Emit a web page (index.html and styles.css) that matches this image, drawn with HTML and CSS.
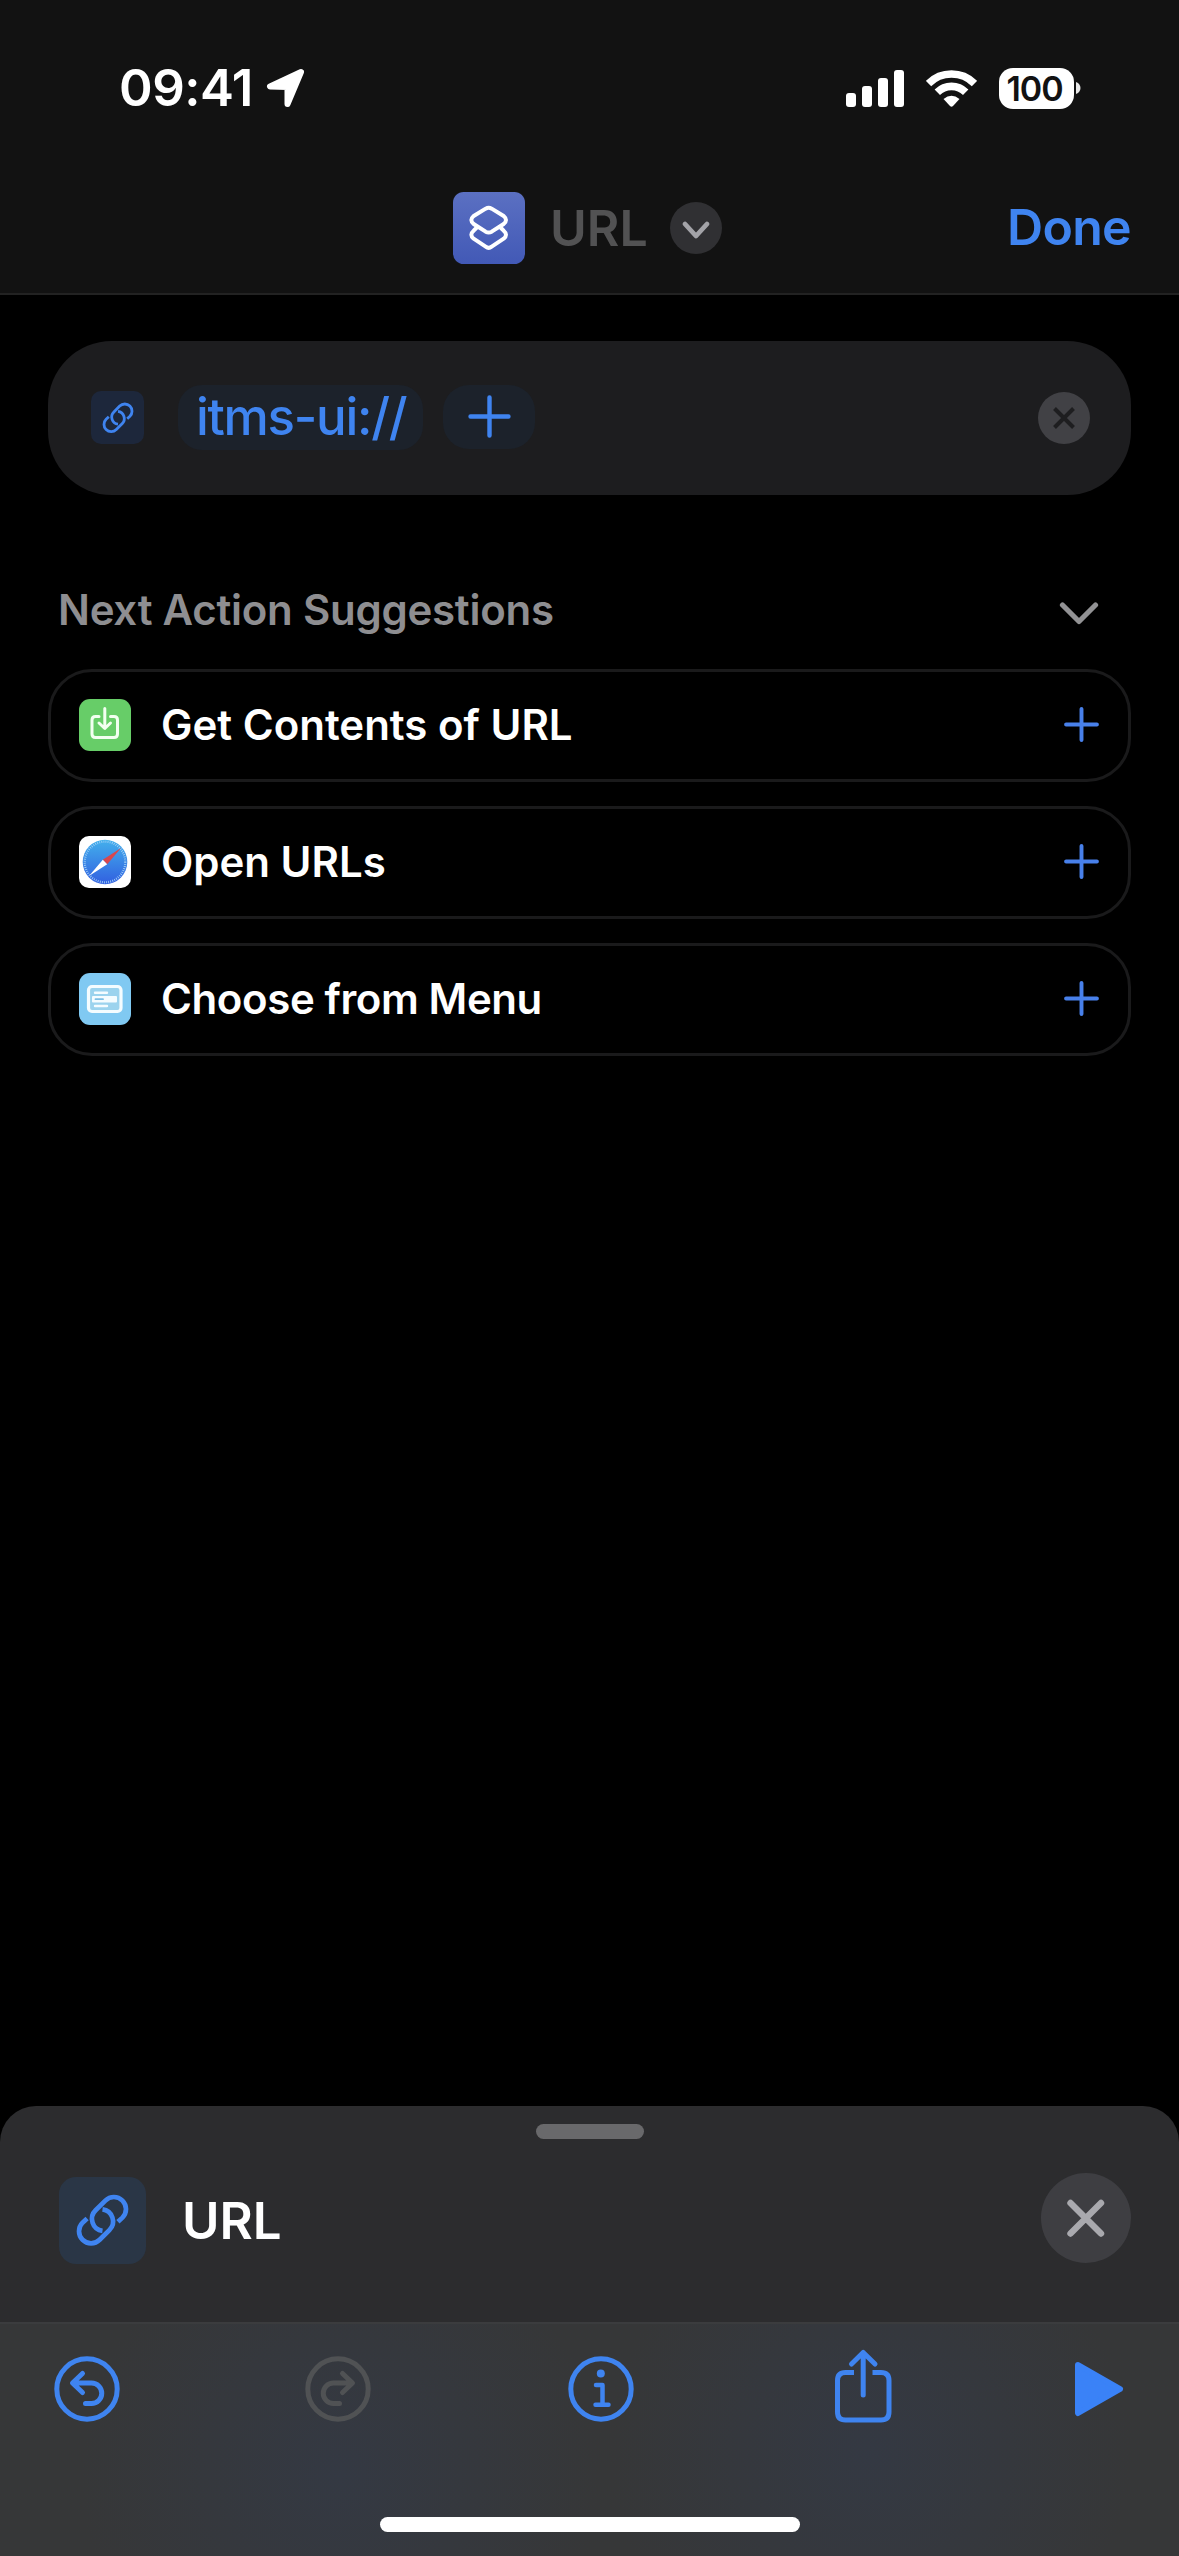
FILE: index.html
```html
<!DOCTYPE html>
<html lang="en">
<head>
<meta charset="utf-8">
<title>URL</title>
<link rel="stylesheet" href="styles.css">
</head>
<body>
<svg class="defs" aria-hidden="true">
  <symbol id="link" viewBox="0 0 170 170">
    <path d="M131 89 L144.500 76.500 A36 36 0 0 0 93.500 25.500 L64.500 54.500 A36 36 0 0 0 85 116"/>
    <path d="M39 79 L25.500 91.500 A36 36 0 0 0 76.500 142.500 L105.500 113.500 A36 36 0 0 0 85 52"/>
  </symbol>
  <symbol id="plus" viewBox="0 0 34 34"><path d="M17 2V32M2 17H32"/></symbol>
</svg>
<div class="screen">
  <header class="top">
    <div class="status">
      <div class="clock"><span class="time">09:41</span>
        <svg class="arrow" width="40" height="40" viewBox="0 0 40 40"><path d="M35 4 L4 18.500 L21.500 19 L21.500 36 Z"/></svg>
      </div>
      <div class="indicators">
        <svg width="58" height="38" viewBox="0 0 58 38" fill="#fff"><rect y="24" width="10" height="14" rx="3"/><rect x="16" y="17" width="10" height="21" rx="3"/><rect x="32" y="9" width="10" height="29" rx="3"/><rect x="48" y="1" width="10" height="37" rx="3"/></svg>
        <svg class="wifi" width="51" height="38" viewBox="0 0 51 38" fill="none" stroke="#fff" stroke-width="7.600"><path d="M2.500 14.500 A32.500 32.500 0 0 1 48.500 14.500"/><path d="M11.300 23.300 A20 20 0 0 1 39.700 23.300"/><path fill="#fff" stroke="none" d="M17.500 30 Q25.500 23.500 33.500 30 L27 37 Q25.500 38.500 24 37 Z"/></svg>
        <div class="battery"><span>100</span></div>
        <svg class="nub" width="5" height="12" viewBox="0 0 5 12" fill="#e8e8e8"><path d="M0 0 C6 2 6 10 0 12Z"/></svg>
      </div>
    </div>
    <nav class="nav">
      <div class="title">
        <svg class="app" width="72" height="72" viewBox="0 0 216 216">
          <defs><linearGradient id="indigo" x1="0" y1="0" x2="0" y2="1"><stop offset="0" stop-color="#5b70c2"/><stop offset="1" stop-color="#4259b6"/></linearGradient></defs>
          <rect width="216" height="216" rx="32" fill="url(#indigo)"/>
          <g fill="none" stroke="#fff" stroke-width="12" stroke-linecap="round" stroke-linejoin="round"><path d="M116 50 L152 72 Q166 84 152 96 L116 119 Q107 124 98 119 L62 96 Q48 84 62 72 L98 50 Q107 45 116 50Z"/><path d="M70 108 L62 116 Q48 128 62 140 L98 164 Q107 171 116 164 L152 140 Q166 128 152 116 L144 108"/></g>
        </svg>
        <h1>URL</h1>
        <svg class="expand" width="52" height="52" viewBox="0 0 52 52"><circle cx="26" cy="26" r="26" fill="#303033"/><path d="M15 22 L26 34 L37 22" fill="none" stroke="#a3a3a8" stroke-width="4.800" stroke-linecap="round" stroke-linejoin="round"/></svg>
      </div>
      <span class="done">Done</span>
    </nav>
  </header>

  <main class="content">
    <section class="action">
      <span class="tile small"><svg width="34" height="34"><use href="#link"/></svg></span>
      <span class="token">itms-ui://</span>
      <span class="add"><svg width="43" height="43"><use href="#plus"/></svg></span>
      <svg class="clear" width="52" height="52" viewBox="0 0 52 52"><circle cx="26" cy="26" r="26" fill="#414145"/><path d="M16.500 16.500 L35.500 35.500 M35.500 16.500 L16.500 35.500" stroke="#1e1e20" stroke-width="4"/></svg>
    </section>

    <div class="heading"><h2>Next Action Suggestions</h2>
      <svg width="40" height="24" viewBox="0 0 40 24"><path d="M3.500 4 L20 20.500 L36.500 4" fill="none" stroke="#929294" stroke-width="5.200" stroke-linecap="round" stroke-linejoin="round"/></svg>
    </div>

    <ul class="suggestions">
      <li>
        <svg width="52" height="52" viewBox="0 0 52 52"><rect width="52" height="52" rx="11" fill="#67cd68"/><g fill="none" stroke="#f2fff0" stroke-width="3" stroke-linecap="round" stroke-linejoin="round"><path d="M20 17.500H16.500Q13 17.500 13 21V35Q13 38.500 16.500 38.500H35Q38.500 38.500 38.500 35V21Q38.500 17.500 35 17.500H31.500M25.800 9.500V29M20 24L25.800 29.500L31.500 24"/></g></svg>
        <span>Get Contents of URL</span>
        <svg class="plus" width="35" height="35"><use href="#plus"/></svg>
      </li>
      <li>
        <svg width="52" height="52" viewBox="0 0 52 52">
          <defs><linearGradient id="sky" x1="0" y1="0" x2="0" y2="1"><stop offset="0" stop-color="#43b0ec"/><stop offset="1" stop-color="#315fe0"/></linearGradient></defs>
          <rect width="52" height="52" rx="10" fill="#fff"/><circle cx="26" cy="26" r="22.300" fill="url(#sky)"/><circle cx="26" cy="26" r="20.300" fill="none" stroke="#a5d2f8" stroke-width="2.200" stroke-dasharray=".8 1.325"/><path d="M42 12 L23.800 23.800 L28.200 28.200Z" fill="#d8474e"/><path d="M10 40 L23.800 23.800 L28.200 28.200Z" fill="#fff"/>
        </svg>
        <span>Open URLs</span>
        <svg class="plus" width="35" height="35"><use href="#plus"/></svg>
      </li>
      <li>
        <svg width="52" height="52" viewBox="0 0 52 52"><rect width="52" height="52" rx="11" fill="#80c9f2"/><rect x="9.500" y="13.500" width="32.500" height="25" rx="3.500" fill="#9bd3ee" stroke="#f4fcff" stroke-width="3.200"/><path d="M16 19.700H28M16 33H28" stroke="#f4fcff" stroke-width="2.400" stroke-linecap="round"/><rect x="13" y="23" width="25" height="6.500" rx="1" fill="#f4fcff"/><path d="M16.500 26.200H24" stroke="#7dbfe5" stroke-width="1.800" stroke-linecap="round"/></svg>
        <span class="tight">Choose from Menu</span>
        <svg class="plus" width="35" height="35"><use href="#plus"/></svg>
      </li>
    </ul>
  </main>

  <footer class="sheet">
    <div class="grabber"></div>
    <div class="sheet-row">
      <span class="tile"><svg width="57" height="57"><use href="#link"/></svg></span>
      <h3>URL</h3>
      <svg class="close" width="90" height="90" viewBox="0 0 90 90"><circle cx="45" cy="45" r="45" fill="#3e3e42"/><path d="M29.500 30 L60 60.500 M60 30 L29.500 60.500" stroke="#a9a9ae" stroke-width="6.400" stroke-linecap="round"/></svg>
    </div>
    <div class="toolbar">
      <div class="tools">
        <svg width="66" height="66" viewBox="0 0 66 66"><circle cx="33" cy="33" r="30.200"/><path d="M28.500 17.500L18.500 27L28.500 36.500M19 27H37.500A10.200 10.200 0 0 1 37.500 47.500H31.500"/></svg>
        <svg class="off" width="66" height="66" viewBox="0 0 66 66"><circle cx="33" cy="33" r="30.200"/><path d="M37.500 17.500L47.500 27L37.500 36.500M47 27H28.500A10.200 10.200 0 0 0 28.500 47.500H34.500"/></svg>
        <svg class="info" width="66" height="66" viewBox="0 0 66 66"><circle cx="33" cy="33" r="30.200"/><path stroke-width="4.500" d="M28 29H34.500V48.500M27.500 48.700H40.500"/><circle class="dot" cx="32.800" cy="17.500" r="4"/></svg>
        <svg class="share" width="58" height="74" viewBox="0 0 58 74"><path stroke-linecap="butt" d="M20 23.500H11.500Q3.500 23.500 3.500 31.500V63Q3.500 71 11.500 71H47Q55 71 55 63V31.500Q55 23.500 47 23.500H38.500"/><path d="M29.200 46V3.500M17.500 15L29.200 3.500L41 15"/></svg>
        <svg class="play" width="50" height="56" viewBox="0 0 50 56"><path d="M4 4L46 28L4 52Z"/></svg>
      </div>
      <div class="home"></div>
    </div>
  </footer>
</div>
</body>
</html>
```
FILE: styles.css
```css
* { box-sizing: border-box; }
body, h1, h2, h3, ul { margin: 0; padding: 0; }
body { background: #000; font-family: Inter, "Liberation Sans", sans-serif; color: #fff; }
svg { display: block; flex: none; }
.defs { position: absolute; width: 0; height: 0; }
.screen { width: 1179px; height: 2556px; display: flex; flex-direction: column; overflow: hidden; }

.top { height: 295px; background: #121212; border-bottom: 2px solid #222; }
.status { height: 176px; padding: 0 98px 0 119px; display: flex; justify-content: space-between; align-items: center; }
.clock { display: flex; align-items: center; gap: 15px; }
.time { font-size: 51px; font-weight: 600; line-height: 60px; letter-spacing: -.5px; width: 132px; white-space: nowrap; }
.arrow { fill: #fff; stroke: #fff; stroke-width: 6; stroke-linejoin: round; }
.indicators { display: flex; align-items: center; }
.wifi { margin-left: 22px; }
.battery { margin-left: 22px; width: 75px; height: 41px; padding-right: 4px; border-radius: 14px; background: #fff; color: #121212; font-size: 34px; font-weight: 600; line-height: 41px; text-align: center; letter-spacing: -1px; }
.nub { margin-left: 2px; }
.nav { height: 104px; padding: 0 48px 0 453px; display: flex; justify-content: space-between; align-items: center; }
.title { display: flex; align-items: center; }
h1 { margin-left: 25px; width: 120px; font-size: 50px; font-weight: 600; line-height: 60px; color: #525253; }
.done { font-size: 50px; font-weight: 600; line-height: 58px; padding-bottom: 2px; letter-spacing: -.7px; color: #3f84f0; }

.content { flex: 1; padding: 46px 48px 0 48px; }
.action { height: 154px; padding: 0 41px 0 43px; border-radius: 64px; background: #1d1d1f; display: flex; align-items: center; }
.tile { width: 87px; height: 87px; border-radius: 17px; background: #2a3646; display: flex; align-items: center; justify-content: center; }
.tile svg { fill: none; stroke: #3f84f0; stroke-width: 14; stroke-linecap: butt; }
.tile.small { width: 53px; height: 53px; margin-bottom: 1px; border-radius: 10px; background: #1d273b; }
.token { margin: 0 0 2px 34px; width: 245px; height: 65px; padding-left: 18px; border-radius: 24px; background: #1c222b; color: #3f84f0; font-size: 51px; font-weight: 500; line-height: 63px; letter-spacing: -1.300px; white-space: nowrap; }
.add { margin: 0 0 3px 20px; width: 92px; height: 64px; border-radius: 26px; background: #1c222b; display: flex; align-items: center; justify-content: center; stroke: #3f84f0; stroke-width: 3.500; stroke-linecap: round; }
.clear { margin-left: auto; }
.heading { margin-top: 85px; height: 60px; padding: 0 32px 0 10px; display: flex; align-items: center; justify-content: space-between; }
h2 { font-size: 42px; font-weight: 600; line-height: 60px; letter-spacing: -.25px; color: #8e8e91; white-space: nowrap; }
.heading svg { margin-top: 6px; }
.suggestions { margin-top: 29px; display: flex; flex-direction: column; gap: 24px; list-style: none; }
.suggestions li { height: 113px; padding: 0 29px 2px 28px; border: 3px solid #1a1a1b; border-radius: 44px; display: flex; align-items: center; font-size: 42px; font-weight: 600; line-height: 60px; }
.suggestions span { margin-left: 30px; white-space: nowrap; }
.suggestions .tight { letter-spacing: -.4px; }
.plus { margin-left: auto; stroke: #4880ea; stroke-width: 3.800; stroke-linecap: round; }

.sheet { height: 450px; border-radius: 36px 36px 0 0; background: #2c2c2e; overflow: hidden; display: flex; flex-direction: column; }
.grabber { width: 108px; height: 15px; margin: 18px auto 0; border-radius: 8px; background: #69696b; }
.sheet-row { height: 183px; padding: 0 48px 26px 59px; display: flex; align-items: center; }
.sheet-row .tile { margin-top: 6px; }
h3 { margin: 7px 0 0 36px; font-size: 51px; font-weight: 600; line-height: 60px; }
.close { margin-left: auto; }
.toolbar { flex: 1; border-top: 2px solid #3b3c3e; background: radial-gradient(circle at 340px 150px, #343943 0, transparent 260px), radial-gradient(circle at 870px 130px, #343943 0, transparent 260px), #363738; }
.tools { height: 130px; padding: 0 55px 0 54px; display: flex; align-items: center; fill: none; stroke: #3f84f0; stroke-width: 5; stroke-linecap: round; stroke-linejoin: round; }
.off { margin-left: 185px; stroke: #505254; }
.info { margin-left: 197px; }
.dot { fill: #3f84f0; stroke: none; }
.share { margin-left: 200px; margin-bottom: 6px; }
.play { margin-left: auto; fill: #3a82f7; stroke: #3a82f7; stroke-width: 6; }
.home { width: 420px; height: 15px; margin: 63px auto 0; border-radius: 8px; background: #fff; }
```
